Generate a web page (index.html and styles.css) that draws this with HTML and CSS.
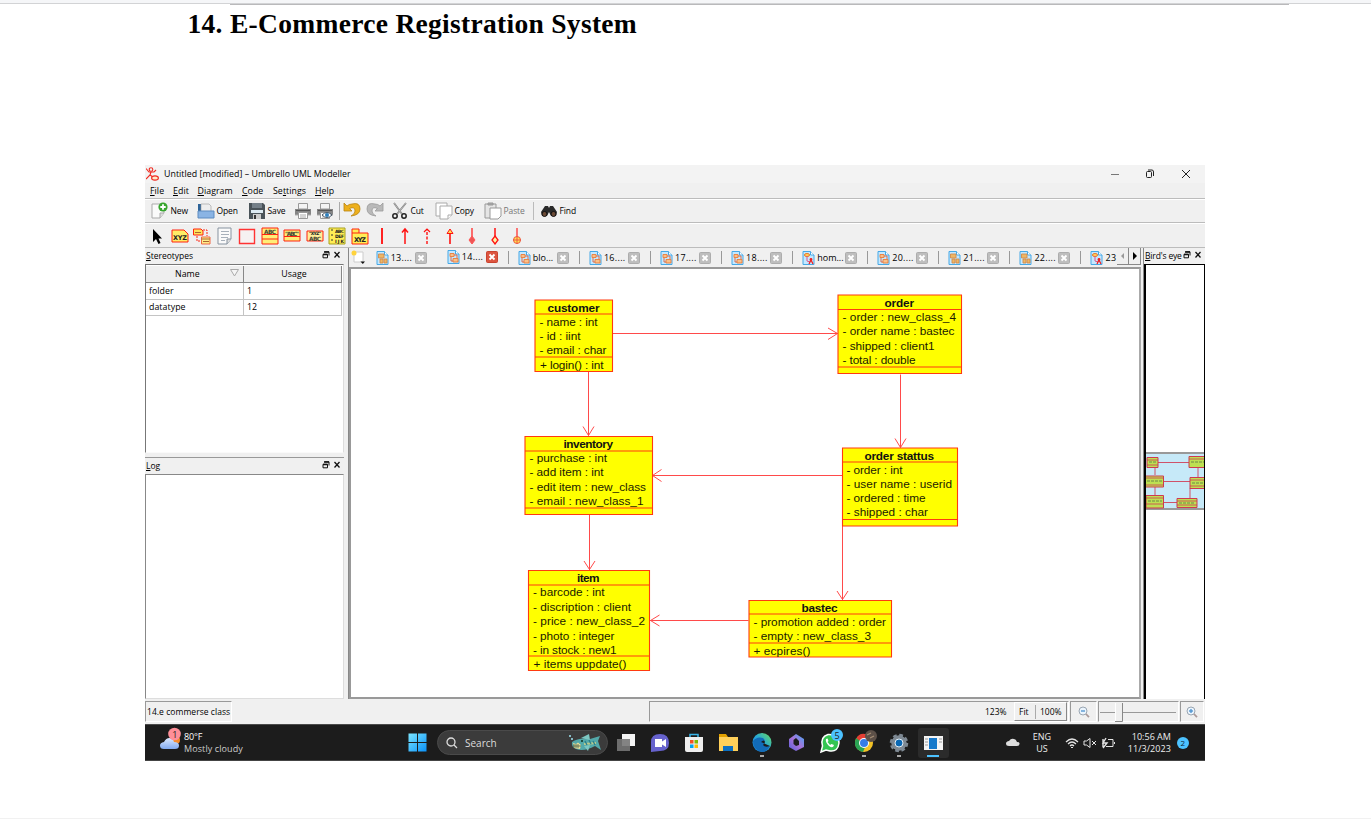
FILE: index.html
```html
<!DOCTYPE html>
<html lang="en">
<head>
<meta charset="utf-8">
<title>E-Commerce Registration System</title>
<link rel="stylesheet" href="styles.css">
</head>
<body>
<svg class="defs" width="0" height="0">
  <defs>
    <symbol id="doc" viewBox="0 0 13 14"><path d="M1 .5H8.500L12 4V13.500H1Z" fill="#c4e8ff" stroke="#46a8e6"/><path d="M8.500 .5V4H12" fill="#fff" stroke="#46a8e6"/><path d="M3 3.500H7V6.500H3ZM6 8.500H11V12H6Z" fill="#f9c08a" stroke="#ea7d3a" stroke-width=".9"/><path d="M4 7V11H6M7 5H10V8" fill="none" stroke="#e0603a" stroke-width=".9"/></symbol>
    <symbol id="docb" viewBox="0 0 13 14"><path d="M1 .5H8.500L12 4V13.500H1Z" fill="#c4e8ff" stroke="#46a8e6"/><path d="M8.500 .5V4H12" fill="#fff" stroke="#46a8e6"/><path d="M2.500 3H8V7H2.500ZM4 8H7V12H4ZM8 8H11V12H8Z" fill="#edb765" stroke="#d08b4f" stroke-width=".9"/></symbol>
    <symbol id="docc" viewBox="0 0 13 14"><path d="M1 .5H8.500L12 4V13.500H1Z" fill="#c4e8ff" stroke="#46a8e6"/><path d="M8.500 .5V4H12" fill="#fff" stroke="#46a8e6"/><ellipse cx="5" cy="4" rx="2.600" ry="1.500" fill="#ffd35d" stroke="#e8762c"/><path d="M5 5V10L8 11" fill="none" stroke="#d58"/><circle cx="9" cy="8.500" r="1.400" fill="#e22"/><path d="M7 13L9 9L11 13" fill="none" stroke="#e22" stroke-width="1.300"/></symbol>
    <symbol id="x" viewBox="0 0 12 12"><rect x=".5" y=".5" width="11" height="11" rx="1" fill="#bebebe" stroke="#adadad"/><path d="M3.500 3.500L8.500 8.500M8.500 3.500L3.500 8.500" stroke="#fff" stroke-width="1.900"/></symbol>
    <symbol id="xr" viewBox="0 0 12 12"><rect x=".5" y=".5" width="11" height="11" rx="1" fill="#dc5540" stroke="#c9432f"/><path d="M3.500 3.500L8.500 8.500M8.500 3.500L3.500 8.500" stroke="#fff" stroke-width="1.900"/></symbol>
    <symbol id="dock" viewBox="0 0 20 8"><path d="M2.500 .8H7V4.500M1 3.300H5.500V6.800H1Z" fill="none" stroke="#111"/><path d="M2 1H7M1 3.500H5.500" stroke="#111" stroke-width="1.500"/><path d="M12.500 1L17.500 6.500M17.500 1L12.500 6.500" stroke="#111" stroke-width="1.300"/></symbol>
    <symbol id="printer" viewBox="0 0 18 18"><path d="M4.500 1.500H13.500V7H4.500Z" fill="#f4f4f4" stroke="#999"/><path d="M1 7H17V13H1Z" fill="#858585"/><path d="M2 8.500H16" stroke="#555"/><path d="M1 13H17" stroke="#aaa"/><path d="M4.500 10.500H13.500V16.500H4.500Z" fill="#fff" stroke="#999"/><path d="M6 13H12M6 15H12" stroke="#aaa"/></symbol>
    <symbol id="zoomglass" viewBox="0 0 12 12"><circle cx="5" cy="5" r="4" fill="#eaf4fd" stroke="#9aa6b2"/><path d="M8 8L11 11.200" stroke="#a99" stroke-width="1.800"/><path d="M3 5H7" stroke="#4b92d0" stroke-width="1.300"/></symbol>
    <linearGradient id="win" x1="0" y1="0" x2="1" y2="1"><stop stop-color="#7ae5ff"/><stop offset="1" stop-color="#0a91f8"/></linearGradient>
    <linearGradient id="edge" x1="0" y1="1" x2="1" y2="0"><stop stop-color="#1475cf"/><stop offset=".5" stop-color="#27a8d9"/><stop offset="1" stop-color="#69dc59"/></linearGradient>
    <linearGradient id="office" x1="0" y1="1" x2="1" y2="0"><stop stop-color="#5a5fd8"/><stop offset=".5" stop-color="#a873d8"/><stop offset="1" stop-color="#45a8f5"/></linearGradient>
    <linearGradient id="cloud" x1="0" y1="0" x2="0" y2="1"><stop stop-color="#dceaff"/><stop offset="1" stop-color="#82aaf0"/></linearGradient>
  </defs>
</svg>

<div class="pagetop"></div>
<hr class="pagerule">
<h1 class="heading">14. E-Commerce Registration System</h1>

<div class="app">
  <div class="titlebar">
    <svg class="logo" width="13" height="14" viewBox="0 0 13 14" fill="none" stroke="#f02a20" stroke-width="1.100"><circle cx="5" cy="2.500" r="1.800"/><path d="M0 1.500L3 5H8L10 3M5 5L4 8L0 12M4 8L7 10"/><ellipse cx="9" cy="11" rx="3.400" ry="2.100" fill="#ffe9c8"/></svg>
    <span class="apptitle">Untitled [modified] – Umbrello UML Modeller</span>
    <svg class="winctl" width="90" height="14" viewBox="0 0 90 14" fill="none" stroke="#222"><path d="M5 7.500H13" stroke="#777"/><rect x="40.500" y="4.500" width="5" height="6" rx="1"/><path d="M42 3H46Q47.500 3 47.500 5V9"/><path d="M76 3L84 11M84 3L76 11"/></svg>
  </div>
  <nav class="menubar"><span class="m1"><u>F</u>ile</span><span class="m2"><u>E</u>dit</span><span class="m3"><u>D</u>iagram</span><span class="m4"><u>C</u>ode</span><span class="m5">Se<u>t</u>tings</span><span><u>H</u>elp</span></nav>

  <div class="toolbar">
    <span class="tool w46"><svg viewBox="0 0 18 18"><path d="M1 2H13V11L9 16H1Z" fill="#fafafa" stroke="#aaa"/><path d="M9 16V11H13" fill="#ddd" stroke="#aaa"/><circle cx="12" cy="5" r="4.600" fill="#36a52d"/><path d="M12 2.300V7.700M9.300 5H14.700" stroke="#fff" stroke-width="1.800"/></svg>New</span>
    <span class="tool w51"><svg viewBox="0 0 18 18"><path d="M1 2H7L8 4H11V14H1Z" fill="#2d6398"/><path d="M4 2H12L14 4V13H4Z" fill="#eee" stroke="#999" stroke-width=".6"/><path d="M1 9H17V16H1Z" fill="#8ab4e4" stroke="#5c8bc0"/></svg>Open</span>
    <span class="tool w46"><svg viewBox="0 0 18 18"><path d="M1 1H15L17 3V17H1Z" fill="#4a5359"/><path d="M4 1H14V6H4Z" fill="#758089"/><path d="M3 8H15V11H3Z" fill="#dce9f1"/><path d="M5 12H13V17H5Z" fill="#ccc"/><path d="M6 13H8V17H6Z" fill="#333"/></svg>Save</span>
    <span class="tool w22"><svg><use href="#printer"/></svg></span>
    <span class="tool w27"><svg viewBox="0 0 18 18"><use href="#printer"/><path d="M6 13Q11 8 16 13Q11 18 6 13Z" fill="#fff" stroke="#456"/><circle cx="11" cy="13" r="2" fill="#2f80bd"/></svg></span>
    <span class="tool w23"><svg viewBox="0 0 18 18"><path d="M1 1V9H9L6.500 6.500Q12 4 12 9Q12 12 8 14Q17 13 17 7Q17 0 9 2Q6 2 4 4Z" fill="#edb01d" stroke="#b98410" stroke-width=".8"/></svg></span>
    <span class="tool w25"><svg viewBox="0 0 18 18"><path d="M17 1V9H9L11.500 6.500Q6 4 6 9Q6 12 10 14Q1 13 1 7Q1 0 9 2Q12 2 14 4Z" fill="#b9b9b9" stroke="#999" stroke-width=".8"/></svg></span>
    <span class="tool w44"><svg viewBox="0 0 18 18" fill="none"><path d="M3 1L11 12M15 1L6 12" stroke="#777" stroke-width="1.700"/><path d="M3 1L11 12M15 1L6 12" stroke="#ddd" stroke-width=".6"/><circle cx="4" cy="14" r="2.200" stroke="#222" stroke-width="1.500"/><circle cx="13" cy="14" r="2.200" stroke="#222" stroke-width="1.500"/></svg>Cut</span>
    <span class="tool w49"><svg viewBox="0 0 18 18" fill="#fff" stroke="#aaa"><path d="M1 1H12V14H1Z"/><path d="M5 4H17V13L13 17H5Z"/><path d="M13 17V13H17"/></svg>Copy</span>
    <span class="tool w56 muted"><svg viewBox="0 0 18 18" fill="#e5e5e5" stroke="#999"><path d="M1 2H12V16H1Z"/><path d="M4 1H9V3H4Z" fill="#aaa"/><path d="M6 6H17V14L14 17H6Z" fill="#fff"/></svg>Paste</span>
    <span class="tool"><svg viewBox="0 0 18 18"><path d="M1 10L5 4L8 4L9 6L10 4L13 4L17 10L16 14H11L9 10L7 14H2Z" fill="#2a2a2a"/><circle cx="4.500" cy="12" r="2.500" fill="#6b4a35" stroke="#111"/><circle cx="13.500" cy="12" r="2.500" fill="#6b4a35" stroke="#111"/></svg>Find</span>
  </div>

  <div class="toolbar palette">
    <svg viewBox="0 0 18 18"><path d="M5 2V15L8 12L10.500 17L12.500 16L10.500 11.500H14Z" fill="#000"/></svg>
    <svg viewBox="0 0 18 18"><path d="M1 3H13L17 7V15H1Z" fill="#ffee66" stroke="#f21"/><text class="ic" x="2" y="13" textLength="14">XYZ</text></svg>
    <svg viewBox="0 0 18 18"><path d="M.5 2H8L10 4V8H.5Z" fill="#ffe25a" stroke="#f21"/><path d="M8.500 10H17V17H8.500Z" fill="#ffee88" stroke="#e64"/><path d="M10 3H14V9M4 9V14H8" fill="none" stroke="#f21" stroke-dasharray="2 1"/><path d="M8.500 12H17M10 14.500H16M2 5.500H8" stroke="#a63"/></svg>
    <svg viewBox="0 0 18 18"><path d="M2 1H15V12L11 17H2Z" fill="#fafafa" stroke="#8793a0"/><path d="M11 17V12H15" fill="#ddd" stroke="#8793a0"/><path d="M5 4.500H13M5 7.500H13M5 10.500H12M5 13.500H9" stroke="#a7b0ba"/></svg>
    <svg viewBox="0 0 18 18"><path d="M1.500 2.500H16.500V16.500H1.500Z" fill="#f6f2f2" stroke="#f33" stroke-width="1.400"/></svg>
    <svg viewBox="0 0 18 18"><path d="M1 1H17V17H1ZM1 7.500H17M1 12H17" fill="#ffee77" stroke="#f21"/><text class="ic light" x="3" y="6.500" textLength="12">ABC</text></svg>
    <svg viewBox="0 0 18 18"><path d="M1 3H17V14H1ZM1 9.500H17" fill="#ffee77" stroke="#f21"/><text class="ic light" x="2" y="8.500" textLength="14">"ABC"</text></svg>
    <svg viewBox="0 0 18 18"><path d="M1 4H17V14H1Z" fill="#ffee99" stroke="#f21"/><text class="ic tiny" x="3" y="8" textLength="12">"XYZ"</text><text class="ic light" x="3" y="13.500" textLength="12">ABC</text></svg>
    <svg viewBox="0 0 18 18"><path d="M1 1H17V17H1Z" fill="#ffee55" stroke="#a8a020"/><path d="M3 3H5M3 8H5M3 13H5" stroke="#333"/><text class="ic tiny" x="7" y="5.500" textLength="9">ABC</text><text class="ic tiny" x="7" y="10.500" textLength="9">DEF</text><text class="ic tiny" x="7" y="15.500" textLength="9">IJK</text></svg>
    <svg viewBox="0 0 18 18"><path d="M1 2H8V6H17V17H1Z" fill="#ffee55" stroke="#f21"/><path d="M1 6H8" stroke="#f21"/><text class="ic" x="3" y="14.500" textLength="12">XYZ</text></svg>
    <svg viewBox="0 0 18 18"><path d="M9 1V17" stroke="#f22" stroke-width="2"/></svg>
    <svg viewBox="0 0 18 18"><path d="M9 17V2M6 5.500L9 2L12 5.500" fill="none" stroke="#f11" stroke-width="1.500"/></svg>
    <svg viewBox="0 0 18 18"><path d="M9 17V2" stroke="#f11" stroke-width="1.400" stroke-dasharray="3 1.500"/><path d="M6 5L9 2L12 5" fill="none" stroke="#f11" stroke-width="1.200"/></svg>
    <svg viewBox="0 0 18 18"><path d="M9 17V6" stroke="#f11" stroke-width="1.600"/><path d="M6 6.500L9 2L12 6.500Z" fill="#ffdf55" stroke="#f11"/></svg>
    <svg viewBox="0 0 18 18"><path d="M9 1V10" stroke="#f33" stroke-width="1.400"/><path d="M9 9L12 13L9 17L6 13Z" fill="#e55" stroke="#f55"/></svg>
    <svg viewBox="0 0 18 18"><path d="M9 1V10" stroke="#f11" stroke-width="1.500"/><path d="M9 9L12 13L9 17L6 13Z" fill="#fff3a6" stroke="#f11" stroke-width="1.300"/></svg>
    <svg viewBox="0 0 18 18"><path d="M9 1V10" stroke="#f33" stroke-width="1.300"/><circle cx="9" cy="13" r="3.500" fill="#ffe650" stroke="#e54"/><path d="M5 13H13M9 9V17" stroke="#e54"/></svg>
  </div>

  <div class="main">
    <aside class="left">
      <div class="docktitle"><span class="dt1"><u>S</u>tereotypes</span><svg width="20" height="8"><use href="#dock"/></svg></div>
      <div class="tree">
        <div class="row head"><span>Name<svg class="sort" width="9" height="8" viewBox="0 0 9 8"><path d="M.5 .5H8.500L4.500 7Z" fill="#f5f5f5" stroke="#aaa"/></svg></span><span>Usage</span></div>
        <div class="row"><span>folder</span><span>1</span></div>
        <div class="row"><span>datatype</span><span>12</span></div>
      </div>
      <div class="docktitle log"><span><u>L</u>og</span><svg width="20" height="8"><use href="#dock"/></svg></div>
      <div class="logbox"></div>
    </aside>

    <section class="center">
      <div class="tabs">
        <span class="newtab"><svg width="15" height="15" viewBox="0 0 15 15"><path d="M3 2H12V12H3Z" fill="#fff" stroke="#ccc"/><circle cx="3" cy="3" r="2.500" fill="#ffd33c"/><path d="M9.500 11.500H14L11.800 14Z" fill="#111"/></svg></span>
        <span class="tab"><svg class="d"><use href="#docb"/></svg><b>13....</b><svg class="c"><use href="#x"/></svg></span>
        <span class="tab active"><svg class="d"><use href="#doc"/></svg><b>14....</b><svg class="c"><use href="#xr"/></svg></span>
        <span class="tab"><svg class="d"><use href="#doc"/></svg><b class="word">blo...</b><svg class="c"><use href="#x"/></svg></span>
        <span class="tab"><svg class="d"><use href="#doc"/></svg><b>16....</b><svg class="c"><use href="#x"/></svg></span>
        <span class="tab"><svg class="d"><use href="#doc"/></svg><b>17....</b><svg class="c"><use href="#x"/></svg></span>
        <span class="tab"><svg class="d"><use href="#doc"/></svg><b>18....</b><svg class="c"><use href="#x"/></svg></span>
        <span class="tab wide"><svg class="d"><use href="#docc"/></svg><b class="word">hom...</b><svg class="c"><use href="#x"/></svg></span>
        <span class="tab"><svg class="d"><use href="#doc"/></svg><b>20....</b><svg class="c"><use href="#x"/></svg></span>
        <span class="tab"><svg class="d"><use href="#docb"/></svg><b>21....</b><svg class="c"><use href="#x"/></svg></span>
        <span class="tab"><svg class="d"><use href="#docb"/></svg><b>22....</b><svg class="c"><use href="#x"/></svg></span>
        <span class="tab last"><svg class="d"><use href="#docc"/></svg><b>23</b></span>
        <span class="scroll"><svg width="5" height="8"><path d="M4 1V7L1 4Z" fill="#999"/></svg></span><span class="scroll"><svg width="5" height="8"><path d="M1 0V8L5 4Z" fill="#000"/></svg></span>
      </div>
      <div class="canvas">
        <svg class="diagram" viewBox="351.500 268.500 788 428">
          <g class="edges">
            <path d="M613 333H838M828.500 327.500L838 333L828.500 339"/>
            <path d="M589 371V435M583.500 426L589 435L594.500 426"/>
            <path d="M901 374V447M895.500 438L901 447L906.500 438"/>
            <path d="M843 475H653M662 469L653 475L662 481"/>
            <path d="M590 514V570M584.500 560.500L590 569L595.500 560.500"/>
            <path d="M843 525V600M837.500 590.500L843 599L848.500 590.500"/>
            <path d="M749 620H650M660 614.500L651 620L660 625.500"/>
          </g>
          <g class="boxes">
            <path d="M535.500 299.500H613V371H535.500ZM535.500 313.500H613M535.500 356.500H613"/>
            <path d="M838.500 294.500H962V373H838.500ZM838.500 309H962M838.500 366.500H962"/>
            <path d="M525.500 436H653V514H525.500ZM525.500 450.500H653M525.500 507.500H653"/>
            <path d="M843 447.500H958V525.500H843ZM843 461.500H958M843 519H958"/>
            <path d="M529 570H650V670H529ZM529 584.500H650M529 655.500H650"/>
            <path d="M749.500 600H892V656.500H749.500ZM749.500 613.500H892M749.500 642.500H892"/>
          </g>
          <g class="names">
            <text x="548" y="311" textLength="52">customer</text>
            <text x="885" y="306" textLength="29.500">order</text>
            <text x="564" y="447.500" textLength="49.500">inventory</text>
            <text x="865" y="459" textLength="69.500">order stattus</text>
            <text x="577.500" y="581" textLength="22.500">item</text>
            <text x="802" y="611.500" textLength="36">bastec</text>
          </g>
          <g class="members">
            <text x="540" y="325" textLength="58">- name : int</text><text x="540" y="339.500" textLength="41">- id : iint</text><text x="540" y="353.500" textLength="67">- email : char</text><text x="540.500" y="368.500" textLength="63.500">+ login() : int</text>
            <text x="843" y="320" textLength="113.500">- order : new_class_4</text><text x="843" y="334.500" textLength="112">- order name : bastec</text><text x="843" y="349" textLength="92">- shipped : client1</text><text x="843" y="363.500" textLength="73">- total : double</text>
            <text x="530" y="461.500" textLength="77.500">- purchase : int</text><text x="530" y="475.500" textLength="74">- add item : int</text><text x="530" y="490" textLength="116.500">- edit item : new_class</text><text x="530" y="504" textLength="114">- email : new_class_1</text>
            <text x="847" y="473" textLength="56">- order : int</text><text x="847" y="487" textLength="105.500">- user name : userid</text><text x="847" y="501.500" textLength="79">- ordered : time</text><text x="847" y="515.500" textLength="81.500">- shipped : char</text>
            <text x="533.500" y="595.500" textLength="71.500">- barcode : int</text><text x="533.500" y="610" textLength="98">- discription : client</text><text x="533.500" y="624.500" textLength="112">- price : new_class_2</text><text x="533.500" y="639" textLength="81.500">- photo : integer</text><text x="533.500" y="653.500" textLength="83.500">- in stock : new1</text><text x="534" y="667.500" textLength="93">+ items uppdate()</text>
            <text x="754" y="625.500" textLength="132.500">- promotion added : order</text><text x="754" y="639.500" textLength="117.500">- empty : new_class_3</text><text x="754" y="654" textLength="57">+ ecpires()</text>
          </g>
        </svg>
      </div>
    </section>

    <aside class="right">
      <div class="docktitle"><span class="dt2"><u>B</u>ird's eye</span><svg width="20" height="8"><use href="#dock"/></svg></div>
      <div class="bird">
        <svg class="mini" width="60" height="58" viewBox="0 0 60 58">
          <rect width="60" height="58" fill="#c6e9f8"/><path d="M0 1H60M0 57H60" stroke="#999" stroke-width="2"/>
          <g fill="none" stroke="#cf5269"><path d="M13 10.500H44M10 16V23M45 29.500H19M10 35V43M53 16V26M45 36V47M32 50.500H19"/></g>
          <g fill="#bde052" stroke="#cf3a50"><path d="M2 5.500H13V15.500H2ZM44 4.500H62V15.500H44ZM0 24H18.500V35H0ZM45 25.500H62V36.500H45ZM1 43.500H18.500V56H1ZM32 46.500H52V55.500H32Z"/></g>
          <path d="M2 8H13M44 7H60M1 26H18M45 28H60M1 46H18M32 49H52M2 13H13M0 33H18M45 34H60M1 52H18M32 53H52" stroke="#cf3a50" stroke-width=".8"/>
          <path d="M4 10H11M46 10H59M2 29H17M47 31H59M3 49H17M34 51H50" stroke="#6d8848" stroke-dasharray="3 1"/>
        </svg>
      </div>
    </aside>
  </div>

  <footer class="status">
    <span class="sunk docname">14.e commerse class</span>
    <span class="sunk spacer"><span class="pct">123%</span><span class="fit"><i>Fit</i><i class="hundred">100%</i></span></span>
    <span class="sunk zoombox"><svg width="12" height="12"><use href="#zoomglass"/></svg></span>
    <span class="sunk slider"><svg width="80" height="20" viewBox="0 0 80 20"><path d="M1 10.500H77" stroke="#999"/><path d="M17 1H23V19H17Z" fill="#efefef"/><path d="M16.500 1V19" stroke="#fff"/><path d="M16 19.500H23.500V1" fill="none" stroke="#888"/></svg></span>
    <span class="sunk zoomin"><svg width="12" height="12" viewBox="0 0 12 12"><use href="#zoomglass"/><path d="M5 3V7" stroke="#4b92d0" stroke-width="1.300"/></svg></span>
  </footer>

  <div class="taskbar">
    <div class="weather"><svg width="22" height="26" viewBox="0 0 22 26"><circle cx="16" cy="13" r="4" fill="#f58b2d"/><path d="M4 22Q0 22 0 18.500Q0 15.500 4 15Q6 11 9.500 11Q13 11 14 15Q19 15 19 18.500Q19 22 15 22Z" fill="url(#cloud)"/><circle cx="14.500" cy="7" r="6.300" fill="#ff8f98"/><text x="12.300" y="10.500" class="badge">1</text></svg><div class="wtext"><span class="w1">80°F</span><span>Mostly cloudy</span></div></div>
    <svg class="start" width="19" height="19" viewBox="0 0 19 19"><path d="M.5 .5H9V9H.5ZM10 .5H18.500V9H10ZM.5 10H9V18.500H.5ZM10 10H18.500V18.500H10Z" fill="url(#win)"/></svg>
    <div class="search"><svg width="12" height="12" viewBox="0 0 12 12" fill="none" stroke="#ddd" stroke-width="1.300"><circle cx="5" cy="5" r="4"/><path d="M8 8L11 11"/></svg><span>Search</span>
      <svg class="fish" width="34" height="20" viewBox="0 0 34 20"><path d="M3 9Q10 4 21 6L31 3L29 8L32 17L26 13Q15 19 7 16Q2 14 3 9Z" fill="#53a8a9"/><path d="M12 5L20 1L21 7ZM15 13L19 18L21 12Z" fill="#7dc7c2"/><path d="M4 10L7 11L9 9.500L12 12L11 16L5 15Z" fill="#e9df9a"/><path d="M5 11V15M7 11V15M9 11V15M4 13H12" stroke="#4b654b" stroke-width=".8"/><circle cx="13" cy="8" r="1" fill="#132"/><path d="M15 11L27 10" stroke="#b9c98c" stroke-width="2"/><path d="M16 8L18 12M20 7L22 11M24 8L26 12" stroke="#287e8c" stroke-width="1.300"/><path d="M0 3H2M2 6H4" stroke="#9fe2f0" stroke-width="1.500"/></svg></div>
    <div class="apps">
      <svg viewBox="0 0 34 36"><path d="M13 9H26V21H13Z" fill="#f3f3f3"/><path d="M8 14H21V26H8Z" fill="#777" fill-opacity=".9"/></svg>
      <svg viewBox="0 0 34 36"><path d="M8 27V17Q8 9 17 9Q26 9 26 18Q26 26 17 26Z" fill="#6662cd"/><path d="M12 14H19V16.500L23 14V22L19 19.500V22H12Z" fill="#fff"/></svg>
      <svg viewBox="0 0 34 36"><path d="M13 13V9.500H21V13" fill="none" stroke="#39b5e9" stroke-width="1.500"/><path d="M8 12H26V25Q26 27 24 27H10Q8 27 8 25Z" fill="#eee"/><path d="M13 15H16.500V18.500H13Z" fill="#f25022"/><path d="M17.500 15H21V18.500H17.500Z" fill="#7fba00"/><path d="M13 19.500H16.500V23H13Z" fill="#00a4ef"/><path d="M17.500 19.500H21V23H17.500Z" fill="#ffb900"/></svg>
      <svg viewBox="0 0 34 36"><path d="M8 9H15L17 12H26V15H8Z" fill="#e1a000"/><path d="M8 12H27V26H8Z" fill="#ffd05a"/><path d="M12 26V21H22V26Z" fill="#0c70c2"/></svg>
      <svg viewBox="0 0 34 36"><circle cx="17" cy="17.500" r="9.500" fill="url(#edge)"/><path d="M8 16Q12 11 18 13Q21 15 19 19Q19 21 25 21Q22 27 17 27Q8 25 8 16Z" fill="#126bb8"/><path d="M16 17Q19 14 20 17Q19 19 18 20Q20 23 25 21" fill="#1c1c1c"/><path d="M15 31H19" stroke="#aaa" stroke-width="2"/></svg>
      <svg viewBox="0 0 34 36"><path d="M10 14L17 9L25 14V22L17 26L10 22Z" fill="url(#office)"/><path d="M14.500 15L17 13L20 16V20L17 21L14.500 19Z" fill="#1c1c1c"/></svg>
      <svg viewBox="0 0 34 36"><path d="M8 27L9.500 21Q7 12 15 9.500Q26 9 26 18Q25 27 17 26L13 25Z" fill="#35c552" stroke="#fff" stroke-width="1.500"/><path d="M13 14Q12 17 16 21Q20 24 21 20L18.500 19L17 20L14.500 17L15.500 16L14.500 13.500Z" fill="#fff"/><circle cx="24" cy="10" r="6" fill="#4cc2ff"/><text x="21.500" y="13.500" class="badge">5</text></svg>
      <svg viewBox="0 0 34 36"><circle cx="17" cy="18" r="9" fill="#f2c226"/><path d="M17 18L9 14Q12 8 18 9L26 14Z" fill="#e43e34"/><path d="M9 13Q5 24 16 27L19 20Z" fill="#2aa354"/><circle cx="17" cy="18" r="5" fill="#fff"/><circle cx="17" cy="18" r="4" fill="#347de8"/><circle cx="24" cy="11" r="6" fill="#5c5048"/><path d="M20 10L24 8M23 13L27 11" stroke="#a58e74" stroke-width="1.300"/><path d="M15 31H19" stroke="#aaa" stroke-width="2"/></svg>
      <svg viewBox="0 0 34 36"><circle cx="17" cy="18" r="7.500" fill="#7e8993" stroke="#7e8993" stroke-width="3.500" stroke-dasharray="3.500 2.390"/><circle cx="17" cy="18" r="7.500" fill="#7e8993"/><circle cx="17" cy="18" r="4" fill="#0968b4" stroke="#e5eef5"/><path d="M15 31H19" stroke="#aaa" stroke-width="2"/></svg>
      <svg viewBox="0 0 34 36"><rect x="2" y="3" width="31" height="30" rx="3" fill="#2b2b2b"/><path d="M8 11H27V25H8Z" fill="#f4f4f4"/><path d="M13 13H21V24H13Z" fill="#1679cb"/><path d="M9 14H12M9 17H12M9 20H12M23 14H26M23 17H26" stroke="#999"/><path d="M11 31H23" stroke="#4cc2ff" stroke-width="2"/></svg>
    </div>
    <svg class="onedrive" width="14" height="9" viewBox="0 0 14 9"><path d="M3 8Q0 8 0 5.500Q0 3.500 3 3Q5 0 8 1Q10 1 11 4Q14 4 13.500 6Q13.500 8 11 8Z" fill="#ddd"/></svg>
    <div class="lang"><span>ENG</span><span>US</span></div>
    <svg class="sys" width="50" height="14" viewBox="0 0 50 14" fill="none" stroke="#e4e4e4"><path d="M1 6Q7 0 13 6M3 8Q7 4 11 8M5 10Q7 8 9 10M6 11.500H8" stroke-width="1.200"/><path d="M19 5H21.500L25 2.500V11.500L21.500 9H19ZM27 5L31 9M31 5L27 9"/><path d="M43 3.500H48V10.500H41M49.500 6V8"/><path d="M41 2L38 7H42L38 12M38 3V11" stroke-width="1.400"/></svg>
    <div class="clock"><span class="time">10:56 AM</span><span>11/3/2023</span></div>
    <span class="notif">2</span>
  </div>
</div>
<div class="pagebottom"></div>
</body>
</html>
```
FILE: styles.css
```css
* { box-sizing: border-box; }
body { margin: 0; width: 1371px; height: 819px; overflow: hidden; background: #fff; display: flex; flex-direction: column; }
.defs { display: block; position: absolute; }
.pagetop { height: 4px; flex: none; background: #f5f6f8; border-bottom: 1px solid #d2d3d5; }
.pagerule { width: 1059px; height: 1px; flex: none; margin: 0 0 0 230px; border: 0; background: #b9b9bb; }
.heading { height: 160px; flex: none; margin: 0; padding: 3px 0 0 187.500px; font: bold 27.500px/32px "Liberation Serif", serif; letter-spacing: .3px; color: #000; white-space: nowrap; }
.pagebottom { margin-top: auto; height: 1px; background: #f1f1f1; }
.app { width: 1060px; height: 596px; flex: none; margin-left: 145px; background: #f0f0f0; color: #000; font: 8.800px/12px "Open Sans", "Noto Sans", sans-serif; display: flex; flex-direction: column; white-space: nowrap; }
svg { display: block; flex: none; }
u { text-underline-offset: 1px; text-decoration-thickness: 1px; }

.titlebar { height: 18px; display: flex; align-items: center; background: #f3f3f3; padding: 0 9px 0 1px; }
.apptitle { margin-left: 5px; letter-spacing: .05px; }
.winctl { margin-left: auto; margin-bottom: 1px; }
.menubar { height: 16px; display: flex; align-items: center; padding-left: 5px; border-bottom: 1px solid #bcbcbc; letter-spacing: .05px; }
.m1 { width: 23px; } .m2 { width: 24.500px; } .m3 { width: 44.500px; } .m4 { width: 31px; } .m5 { width: 42px; }
.toolbar { height: 24px; display: flex; align-items: center; padding-left: 6px; border-top: 1px solid #fff; border-bottom: 1px solid #bcbcbc; font-size: 8.500px; }
.tool { display: flex; align-items: center; gap: 1.500px; letter-spacing: -.1px; }
.tool svg { width: 18px; height: 18px; }
.w46 { width: 46px; } .w51 { width: 51px; } .w22 { width: 22px; } .w23 { width: 23px; } .w25 { width: 25px; } .w44 { width: 44px; } .w49 { width: 49px; }
.w27 { width: 27px; background: linear-gradient(#aaa, #aaa) 23px 0 / 1px 100% no-repeat; }
.w56 { width: 56px; background: linear-gradient(#bbb, #bbb) 49px 0 / 1px 100% no-repeat; }
.muted { color: #777; }
.palette { height: 25px; display: grid; grid-template-columns: repeat(17, 22.500px); justify-items: center; padding-left: 1px; }
.palette svg { width: 18px; height: 18px; }
.ic { font: bold 6.500px "DejaVu Sans", sans-serif; fill: #222; }
.light { font-size: 5.800px; fill: #443; }
.tiny { font-size: 4.500px; }

.main { height: 451px; display: flex; }
.left { width: 199px; display: flex; flex-direction: column; }
.docktitle { height: 16px; display: flex; align-items: center; justify-content: space-between; padding: 0 2px 2px 1px; font-size: 8.500px; }
.dt1 { letter-spacing: 0; padding-top: 1px; }
.tree { height: 189px; background: #fff; border: 1px solid #777; border-right-color: #ddd; border-bottom-color: #fafafa; padding: 1px 1px 0 0; }
.row { height: 16px; display: grid; grid-template-columns: 98px 98px; font-size: 8.800px; line-height: 16px; letter-spacing: .05px; }
.row span { padding-left: 3px; border-right: 1px solid #c4c4c4; border-bottom: 1px solid #c4c4c4; }
.head { height: 17px; text-align: center; }
.head span { background: #efefef; border-right: 1px solid #888; border-bottom: 1px solid #888; display: flex; align-items: center; justify-content: center; }
.head span:first-child { padding-left: 29px; justify-content: flex-start; }
.sort { margin-left: 30px; margin-bottom: 2px; }
.log { margin-top: 4px; border-top: 1px solid #999; height: 17px; padding-bottom: 2px; }
.log span { padding-top: 2px; }
.logbox { flex: 1; background: #fff; border: 1px solid #888; border-right-color: #ddd; border-bottom-color: #ddd; }
.center { width: 793px; margin-left: 4px; display: flex; flex-direction: column; border-left: 1px solid #888; }
.tabs { height: 19px; display: flex; font-size: 9px; overflow: hidden; }
.newtab { width: 18px; padding: 2px 0 0 2px; }
.tab { width: 71.100px; height: 19px; display: flex; align-items: center; padding: 1px 0 0 9px; flex: none; background: linear-gradient(#999, #999) 100% 3px / 1px 13px no-repeat; }
.tab:nth-child(2) { background: none; }
.tab.active { padding-bottom: 2px; }
.tab b { font-weight: normal; width: 24px; margin-left: 2px; letter-spacing: .3px; }
.tab b.word { letter-spacing: 0; }
.tab.wide { width: 75px; } .tab.wide b { width: 28px; }
.tab.last { width: 36px; background: none; }
.d { width: 13px; height: 14px; } .c { width: 12px; height: 12px; }
.scroll { width: 12px; height: 17px; display: flex; align-items: center; justify-content: center; background: #efefef; border-right: 1px solid #888; border-bottom: 1px solid #888; }
.canvas { flex: 1; min-height: 0; background: #fff; border: 2px solid #999; border-right-color: #aaa; }
.diagram { width: 788px; height: 428px; font: 11.800px "Liberation Sans", Arial, sans-serif; }
.edges { fill: none; stroke: #ff4a4a; stroke-width: 1; }
.boxes { fill: #ff0; stroke: #ff3a10; stroke-width: 1.100; }
.names { font-weight: bold; fill: #111; }
.members { fill: #1a1a00; }
.right { width: 62px; margin-left: auto; display: flex; flex-direction: column; border-left: 1px solid #888; }
.dt2 { letter-spacing: -.15px; padding-top: 1px; }
.bird { flex: 1; background: #fff; border: 1px solid #000; border-left-width: 2px; padding-top: 187px; overflow: hidden; border-bottom: 0; }
.mini { margin-left: -1px; }

.status { height: 25px; display: flex; padding-top: 2px; font-size: 8.500px; line-height: 20px; }
.sunk { height: 21px; border: 1px solid #999; border-right-color: #fff; border-bottom-color: #fff; display: flex; align-items: center; }
.docname { width: 87px; padding-left: 1px; letter-spacing: .05px; }
.spacer { width: 420px; margin-left: 417px; padding-left: 335px; }
.pct { width: 29px; }
.fit { width: 53px; height: 19px; display: flex; align-items: center; padding-left: 4px; border: 1px solid #fff; border-right-color: #888; border-bottom-color: #888; }
.fit i { font-style: normal; width: 16px; line-height: 14px; }
.fit .hundred { border-left: 1px solid #aaa; padding-left: 4px; width: 30px; }
.zoombox { width: 27px; margin-left: 1px; justify-content: center; }
.slider { width: 81px; margin-left: 1px; }
.zoomin { width: 24px; margin-left: 1px; justify-content: center; }

.taskbar { height: 37px; background: #1c1c1c; border-top: 1px solid #4b4b4b; border-bottom: 1px solid #444; display: flex; align-items: center; color: #eee; font-size: 9px; line-height: 12px; }
.weather { width: 248px; padding-left: 15px; display: flex; align-items: center; gap: 2px; }
.weather > svg { margin-bottom: 6px; }
.wtext { display: flex; flex-direction: column; color: #ccc; letter-spacing: .1px; }
.w1 { color: #fff; letter-spacing: -.1px; }
.badge { font: 9px "Open Sans", sans-serif; fill: #222; }
.start { margin-left: 15px; }
.search { width: 171px; height: 25px; margin-left: 10px; padding: 0 4px 0 8px; display: flex; align-items: center; background: #3b3b3b; border: 1px solid #4a4a4a; border-radius: 13px; font-size: 10px; color: #ddd; }
.search span { margin-left: 7px; }
.fish { margin-left: auto; }
.apps { display: grid; grid-template-columns: repeat(10, 34.150px); margin-left: .5px; }
.apps svg { width: 34px; height: 36px; }
.onedrive { margin-left: 56px; }
.lang { width: 20px; margin-left: 12px; display: flex; flex-direction: column; align-items: center; }
.sys { margin-left: 13px; }
.clock { width: 55px; margin-left: 1px; display: flex; flex-direction: column; align-items: flex-end; letter-spacing: .05px; }
.time { letter-spacing: 0; }
.notif { width: 12px; height: 12px; margin-left: 6px; border-radius: 50%; background: #4cc2ff; color: #123; text-align: center; font-size: 8px; }
```
